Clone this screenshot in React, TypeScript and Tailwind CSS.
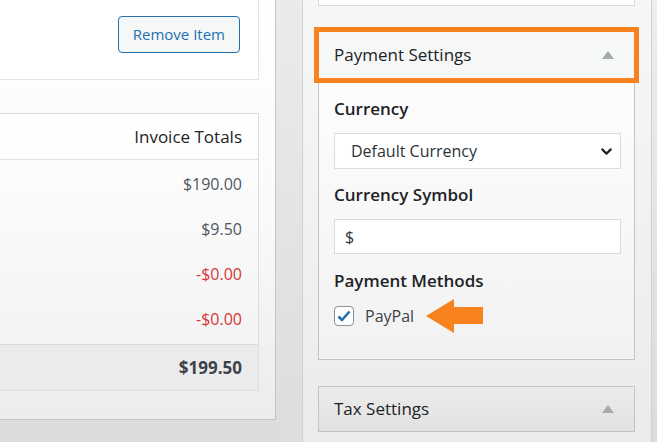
import { ChevronDown } from "lucide-react";

const font = { fontFamily: '"Open Sans", "Noto Sans", sans-serif' };

const Caret = () => (
  <svg width="12" height="8" viewBox="0 0 12 8" className="fill-[#a7aaad]">
    <path d="M6 0 L12 8 L0 8 Z" />
  </svg>
);

const Amount = ({ value, red }: { value: string; red?: boolean }) => (
  <div className="h-[45px] flex items-center justify-end pr-[16px]">
    <span className={red ? "text-[#d63638]" : "text-[#50575e]"}>{value}</span>
  </div>
);

const LeftColumn = () => (
  <div className="w-[276px] h-[420px] shrink-0 border-r border-b border-[#c3c4c7] bg-gradient-to-b from-white via-[#fafafa] to-[#ececec] pr-[16px]">
    <div className="h-[80px] bg-white border-r border-b border-[#e4e4e4] flex items-start justify-end pt-[16px] pr-[18px]">
      <button className="h-[37px] px-[14px] rounded-[4px] border border-[#2271b1] bg-[#f6f7f7] text-[#2271b1] text-[15px]">
        Remove Item
      </button>
    </div>
    <div className="mt-[33px] border-t border-r border-b border-[#dcdcde] bg-gradient-to-b from-white to-[#f1f1f1]">
      <div className="h-[46px] border-b border-[#e2e2e2] flex items-center justify-end pr-[16px] text-[17px] text-[#1d2327]">
        Invoice Totals
      </div>
      <div className="text-[16px] pt-[1px] pb-[3px]">
        <Amount value="$190.00" />
        <Amount value="$9.50" />
        <Amount value="-$0.00" red />
        <Amount value="-$0.00" red />
      </div>
      <div className="h-[46px] border-t border-[#dadada] bg-[#ebebeb] flex items-center justify-end pr-[16px] text-[17px] font-bold text-[#3c434a]">
        $199.50
      </div>
    </div>
  </div>
);

const Sidebar = () => (
  <div className="w-[350px] h-[442px] shrink-0 border-l border-r border-[#d0d0d0] bg-gradient-to-b from-[#f7f7f7] to-[#ebebeb] pl-[15px] pr-[16px]">
    <div className="h-[6px] bg-white border-l border-r border-b border-[#dcdcde]" />
    <div className="mt-[25px] border border-[#c3c4c7] bg-gradient-to-b from-white to-[#f2f2f2]">
      <div className="h-[46px] bg-[#f6f7f7] flex items-center justify-between pl-[15px] pr-[20px] outline-[5px] outline-solid outline-[#f7821e] relative">
        <span className="text-[17px] text-[#1d2327]">Payment Settings</span>
        <Caret />
      </div>
      <div className="pl-[15px] pr-[13px] pt-[20px] pb-[33px]">
        <div className="text-[17px] font-semibold text-[#1d2327] leading-[22px]">Currency</div>
        <div className="mt-[13px] h-[36px] border border-[#dcdcde] bg-white flex items-center justify-between pl-[16px] pr-[5px] text-[16px] text-[#2c3338]">
          <span>Default Currency</span>
          <ChevronDown size={17} strokeWidth={3} className="text-[#1d2327]" />
        </div>
        <div className="mt-[15px] text-[17px] font-semibold text-[#1d2327] leading-[22px]">Currency Symbol</div>
        <div className="mt-[13px] h-[35px] border border-[#dcdcde] bg-white flex items-center pl-[10px] text-[16px] text-[#2c3338]">
          $
        </div>
        <div className="mt-[16px] text-[17px] font-semibold text-[#1d2327] leading-[22px]">Payment Methods</div>
        <div className="mt-[14px] flex items-center h-[20px]">
          <div className="w-[20px] h-[20px] rounded-[4px] border border-[#8c8f94] bg-white flex items-center justify-center">
            <svg width="14" height="12" viewBox="0 0 14 12">
              <path d="M1.5 6.5 L5 10 L12.5 1.5" fill="none" stroke="#2271b1" strokeWidth="2.6" strokeLinejoin="round" />
            </svg>
          </div>
          <span className="ml-[11px] text-[16px] text-[#3c434a]">PayPal</span>
          <svg width="58" height="34" viewBox="0 0 58 34" className="ml-[12px]">
            <path d="M0 17 L28 0 L28 8 L57 8 L57 25 L28 25 L28 34 Z" fill="#f7821e" />
          </svg>
        </div>
      </div>
    </div>
    <div className="mt-[26px] border border-[#c3c4c7] bg-gradient-to-b from-[#ececec] to-[#e2e2e2]">
      <div className="h-[44px] flex items-center justify-between pl-[15px] pr-[20px]">
        <span className="text-[17px] text-[#1d2327]">Tax Settings</span>
        <Caret />
      </div>
    </div>
  </div>
);

export default function App() {
  return (
    <div
      className="w-[657px] h-[442px] overflow-hidden flex bg-gradient-to-b from-[#ededed] to-[#dcdcdc]"
      style={font}
    >
      <LeftColumn />
      <div className="w-[26px] shrink-0 h-[442px] bg-gradient-to-b from-[#ebebeb] to-[#dddddd]" />
      <Sidebar />
    </div>
  );
}
